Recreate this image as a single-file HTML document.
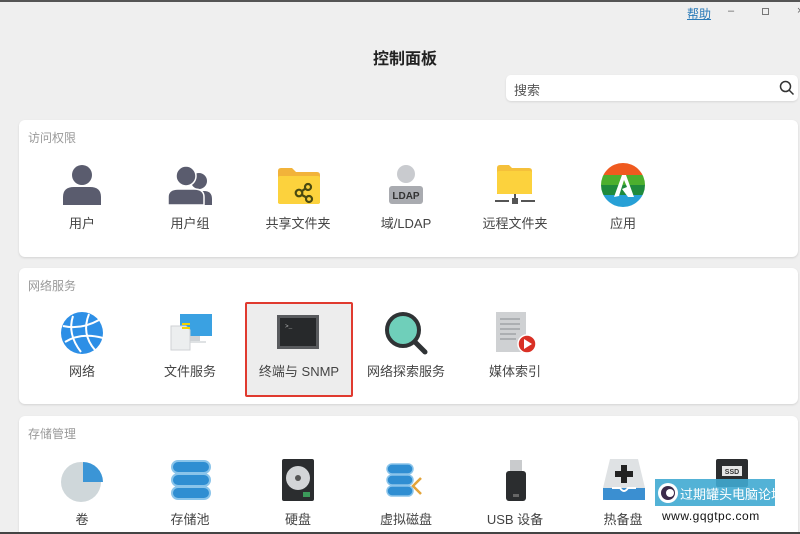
<!DOCTYPE html>
<html><head><meta charset="utf-8"><style>
*{margin:0;padding:0;box-sizing:border-box}
html,body{width:800px;height:534px;overflow:hidden}
body{background:#efefef;font-family:"Liberation Sans","Noto Sans CJK SC",sans-serif;position:relative;color:#333}
.a{position:absolute}
.card{position:absolute;left:19px;width:779px;background:#fff;border-radius:6px;box-shadow:0 1px 2px rgba(0,0,0,.12)}
.st{position:absolute;left:9px;font-size:12px;color:#999}
.lb{position:absolute;width:108px;text-align:center;font-size:13px;color:#444}
</style></head><body>
<div class="a" style="left:0;top:0;width:800px;height:2px;background:#555"></div>
<div class="a" style="left:687px;top:5px;font-size:12px;color:#2a7ab8;text-decoration:underline">帮助</div>
<div class="a" style="left:728px;top:5px;font-size:11px;color:#666">–</div>
<div class="a" style="left:762px;top:8px;width:7px;height:7px;border:1px solid #777"></div>
<div class="a" style="left:797px;top:5px;font-size:11px;color:#666">×</div>
<div class="a" style="left:340px;top:45px;width:130px;text-align:center;font-size:16px;font-weight:bold;color:#222">控制面板</div>
<div class="a" style="left:506px;top:75px;width:292px;height:26px;background:#fff;border-radius:5px;box-shadow:0 1px 2px rgba(0,0,0,.1)"></div>
<div class="a" style="left:514px;top:80px;font-size:13px;color:#555">搜索</div>
<svg class="a" style="left:779px;top:80px" width="16" height="16"><circle cx="6.5" cy="6.5" r="5" fill="none" stroke="#333" stroke-width="1.5"/><line x1="10" y1="10" x2="14.5" y2="14.5" stroke="#333" stroke-width="1.5"/></svg>

<div class="card" style="top:120px;height:137px"><div class="st" style="top:9px">访问权限</div></div>
<div class="card" style="top:268px;height:136px"><div class="st" style="top:9px">网络服务</div></div>
<div class="card" style="top:416px;height:130px"><div class="st" style="top:9px">存储管理</div></div>

<!-- row 1 -->
<svg class="a" style="left:62px;top:163px" width="40" height="44"><circle cx="20" cy="12" r="10" fill="#5a5c6e"/><path d="M1 42 V34 Q1 24 12 24 H28 Q39 24 39 34 V42Z" fill="#5a5c6e"/></svg>
<svg class="a" style="left:168px;top:165px" width="46" height="42"><circle cx="31" cy="16" r="8" fill="#5a5c6e"/><path d="M22 40 V32 Q22 26 30 26 H36 Q44 26 44 34 V40Z" fill="#5a5c6e"/><circle cx="18" cy="11" r="10" fill="#5a5c6e" stroke="#fff" stroke-width="1.5"/><path d="M0 40 V32 Q0 24 10 24 H26 Q36 24 36 32 V40Z" fill="#5a5c6e" stroke="#fff" stroke-width="1.5"/></svg>
<svg class="a" style="left:277px;top:167px" width="44" height="38"><path d="M1 4 Q1 1 4 1 H15 L19 5 H40 Q43 5 43 8 V36 H1Z" fill="#f2b33a"/><rect x="1" y="9" width="42" height="28" rx="2" fill="#fcd23d"/><g fill="none" stroke="#4a4a10" stroke-width="2.2"><circle cx="22" cy="26" r="3.3"/><circle cx="31" cy="20" r="3"/><circle cx="32" cy="32" r="3"/><line x1="25" y1="24" x2="28.5" y2="21.5"/><line x1="25" y1="28" x2="29.5" y2="30.5"/></g></svg>
<svg class="a" style="left:388px;top:163px" width="36" height="44"><circle cx="18" cy="11" r="9" fill="#c9cbcf"/><rect x="1" y="23" width="34" height="18" rx="3" fill="#a9abb0"/><text x="18" y="36" font-size="10" font-weight="bold" text-anchor="middle" fill="#333" font-family="Liberation Sans">LDAP</text></svg>
<svg class="a" style="left:493px;top:162px" width="44" height="46"><path d="M4 6 Q4 3 7 3 H16 L19 6 H36 Q39 6 39 9 V32 H4Z" fill="#f5c03a"/><rect x="4" y="9" width="35" height="23" rx="2" fill="#fcd23d"/><rect x="21" y="32" width="2" height="6" fill="#555"/><rect x="2" y="38" width="14" height="2" fill="#555"/><rect x="28" y="38" width="14" height="2" fill="#555"/><rect x="19" y="36" width="6" height="6" fill="#555"/></svg>
<svg class="a" style="left:601px;top:163px" width="44" height="46"><defs><clipPath id="c"><circle cx="22" cy="22" r="22"/></clipPath></defs><g clip-path="url(#c)"><rect width="44" height="12" fill="#ef5a1f"/><rect y="12" width="44" height="10" fill="#4caf2e"/><rect y="22" width="44" height="10" fill="#1f8a3c"/><rect y="32" width="44" height="12" fill="#27a0d6"/></g><path d="M13 34 L21 12 H25 L33 34 H27 L21 26 L26 24 L23 17 L18 33Z" fill="#fff"/></svg>
<div class="lb" style="left:28px;top:213px">用户</div>
<div class="lb" style="left:136px;top:213px">用户组</div>
<div class="lb" style="left:244px;top:213px">共享文件夹</div>
<div class="lb" style="left:352px;top:213px">域/LDAP</div>
<div class="lb" style="left:461px;top:213px">远程文件夹</div>
<div class="lb" style="left:569px;top:213px">应用</div>

<!-- row 2 -->
<div class="a" style="left:245px;top:302px;width:108px;height:95px;background:#ededed;border:2px solid #e03a2f;border-radius:2px"></div>
<svg class="a" style="left:59px;top:310px" width="46" height="46"><circle cx="23" cy="23" r="21" fill="#2d8fe6"/><g fill="none" stroke="#fff" stroke-width="2"><path d="M4 16 Q22 20 40 10"/><path d="M6 32 Q22 22 44 28"/><path d="M14 6 Q8 24 22 42"/><path d="M30 4 Q22 24 36 40"/></g></svg>
<svg class="a" style="left:170px;top:312px" width="44" height="40"><rect x="10" y="2" width="32" height="22" fill="#3aa1e2"/><rect x="20" y="24" width="10" height="5" fill="#cfd3d6"/><rect x="14" y="29" width="22" height="2" fill="#dfe2e4"/><path d="M1 14 H16 L20 18 V38 H1Z" fill="#eceeef" stroke="#cfd2d4"/><path d="M12 12 H20 M12 16 H20" stroke="#f4d200" stroke-width="2"/></svg>
<svg class="a" style="left:276px;top:314px" width="44" height="36"><rect x="1" y="1" width="42" height="34" fill="#595b5e"/><rect x="4" y="4" width="36" height="28" fill="#27292b"/><text x="9" y="14" font-size="6" fill="#bbb" font-family="Liberation Mono">&gt;_</text></svg>
<svg class="a" style="left:384px;top:311px" width="46" height="46"><circle cx="19" cy="19" r="16" fill="#6fcfba" stroke="#2f3335" stroke-width="4"/><line x1="31" y1="31" x2="41" y2="41" stroke="#2f3335" stroke-width="5" stroke-linecap="round"/></svg>
<svg class="a" style="left:494px;top:310px" width="44" height="46"><rect x="2" y="2" width="30" height="40" fill="#cfd1d3"/><g stroke="#8a8d90"><line x1="6" y1="9" x2="26" y2="9"/><line x1="6" y1="14" x2="26" y2="14"/><line x1="6" y1="19" x2="26" y2="19"/><line x1="6" y1="24" x2="22" y2="24"/><line x1="6" y1="29" x2="22" y2="29"/></g><circle cx="33" cy="34" r="9" fill="#d93025" stroke="#fff" stroke-width="1.5"/><path d="M30 29 L38 34 L30 39Z" fill="#fff"/></svg>
<div class="lb" style="left:28px;top:361px">网络</div>
<div class="lb" style="left:136px;top:361px">文件服务</div>
<div class="lb" style="left:245px;top:361px">终端与 SNMP</div>
<div class="lb" style="left:352px;top:361px">网络探索服务</div>
<div class="lb" style="left:461px;top:361px">媒体索引</div>

<!-- row 3 -->
<svg class="a" style="left:59px;top:458px" width="46" height="46"><circle cx="22" cy="24" r="20" fill="#cfd7da"/><path d="M24 4 A20 20 0 0 1 44 24 H24Z" fill="#3b95d6"/></svg>
<svg class="a" style="left:169px;top:459px" width="44" height="44"><g fill="#2f8ed2" stroke="#8ac4ea" stroke-width="2"><rect x="3" y="2" width="38" height="12" rx="6"/><rect x="3" y="15" width="38" height="12" rx="6"/><rect x="3" y="28" width="38" height="12" rx="6"/></g></svg>
<svg class="a" style="left:281px;top:458px" width="34" height="44"><rect x="1" y="1" width="32" height="42" rx="2" fill="#2b2d2f"/><circle cx="17" cy="20" r="12" fill="#d3d5d7"/><circle cx="17" cy="20" r="3" fill="#555"/><rect x="22" y="34" width="7" height="5" fill="#3c9a5a"/></svg>
<svg class="a" style="left:385px;top:462px" width="44" height="40"><g fill="#2f8ed2" stroke="#8ac4ea" stroke-width="1.5"><rect x="2" y="2" width="26" height="10" rx="5"/><rect x="2" y="13" width="26" height="10" rx="5"/><rect x="2" y="24" width="26" height="10" rx="5"/></g><path d="M36 16 L28 24 L36 32" fill="none" stroke="#e3a43a" stroke-width="2.5"/></svg>
<svg class="a" style="left:502px;top:458px" width="28" height="46"><rect x="8" y="2" width="12" height="12" fill="#c9cbcd"/><rect x="4" y="13" width="20" height="30" rx="3" fill="#2b2d2f"/><rect x="11" y="36" width="6" height="3" fill="#666"/></svg>
<svg class="a" style="left:602px;top:458px" width="44" height="44"><path d="M8 1 H36 L43 30 V42 H1 V30Z" fill="#dfe2e4"/><rect x="1" y="30" width="42" height="12" fill="#3b8fd1"/><path d="M10 30 H18 Q22 36 26 30 H34" fill="none" stroke="#fff" stroke-width="2"/><rect x="19" y="7" width="6" height="18" fill="#222"/><rect x="13" y="13" width="18" height="6" fill="#222"/></svg>
<svg class="a" style="left:715px;top:458px" width="34" height="30"><rect x="1" y="1" width="32" height="28" rx="2" fill="#2b2d2f"/><rect x="7" y="8" width="20" height="10" fill="#e6e6e6"/><text x="17" y="16" font-size="7" font-weight="bold" text-anchor="middle" fill="#333" font-family="Liberation Sans">SSD</text></svg>
<div class="lb" style="left:28px;top:509px">卷</div>
<div class="lb" style="left:136px;top:509px">存储池</div>
<div class="lb" style="left:244px;top:509px">硬盘</div>
<div class="lb" style="left:352px;top:509px">虚拟磁盘</div>
<div class="lb" style="left:461px;top:509px">USB 设备</div>
<div class="lb" style="left:569px;top:509px">热备盘</div>

<div class="a" style="left:655px;top:479px;width:120px;height:27px;background:rgba(64,170,210,.9)"></div>
<svg class="a" style="left:656px;top:481px" width="24" height="24"><circle cx="12" cy="12" r="10" fill="#fff"/><circle cx="12" cy="12" r="7" fill="#3b2a4a"/><circle cx="14" cy="12" r="4" fill="#fff"/></svg>
<div class="a" style="left:680px;top:484px;font-size:13px;color:#fff;white-space:nowrap">过期罐头电脑论坛</div>
<div class="a" style="left:662px;top:509px;font-size:12px;color:#111;letter-spacing:.5px">www.gqgtpc.com</div>
<div class="a" style="left:0;top:532px;width:800px;height:2px;background:#444"></div>
</body></html>
